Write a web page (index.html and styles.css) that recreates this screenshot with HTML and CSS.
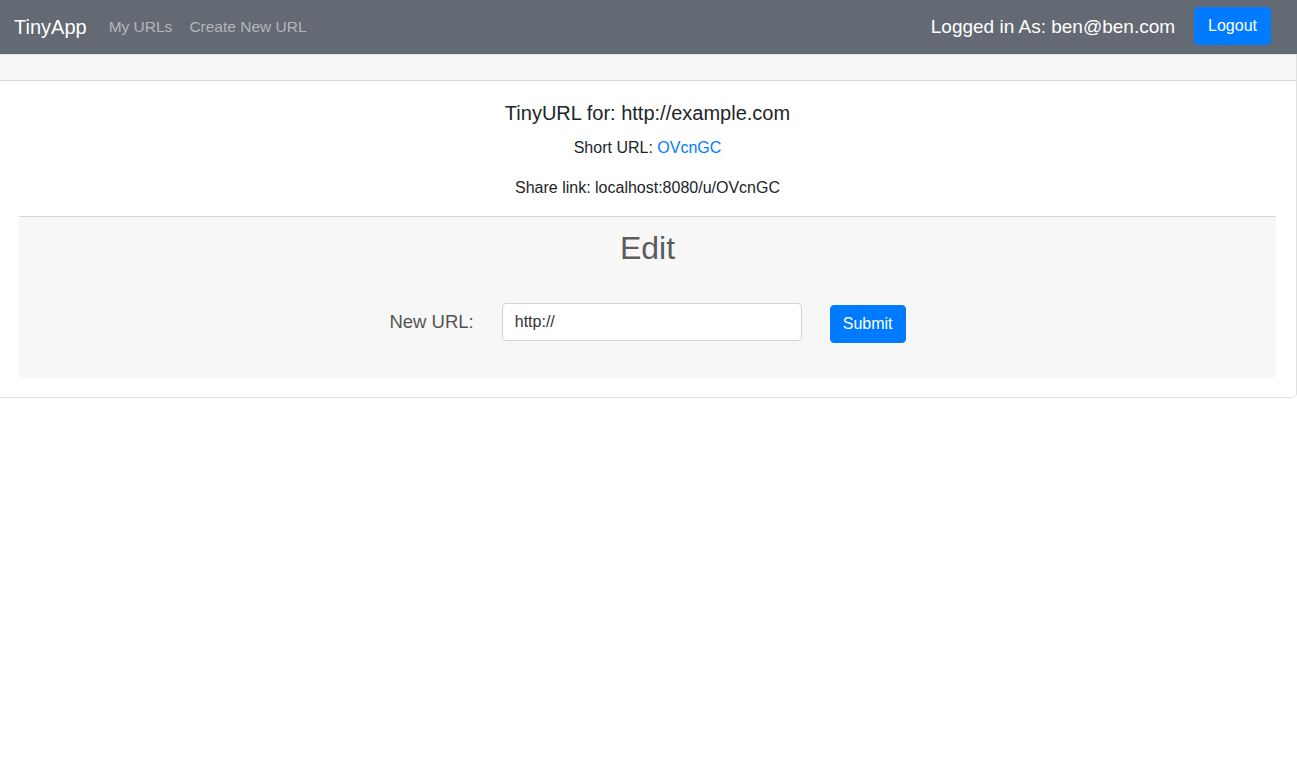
FILE: index.html
```html
<!DOCTYPE html>
<html>
<head>
<meta charset="utf-8">
<link rel="stylesheet" href="styles.css">
</head>
<body>
<nav class="navbar">
  <div class="nav-left">
    <a class="brand" href="#">TinyApp</a>
    <a class="nav-link" href="#">My URLs</a>
    <a class="nav-link" href="#">Create New URL</a>
  </div>
  <div class="nav-right">
    <span class="user">Logged in As: ben@ben.com</span>
    <button class="btn btn-primary logout">Logout</button>
  </div>
</nav>
<div class="card">
  <div class="card-header"></div>
  <div class="card-body">
    <h5 class="card-title">TinyURL for: http://example.com</h5>
    <p class="card-text">Short URL: <a href="#">OVcnGC</a></p>
    <p class="card-text">Share link: localhost:8080/u/OVcnGC</p>
    <div class="card-footer">
      <h2 class="edit-title">Edit</h2>
      <form class="edit-form">
        <label class="form-label">New URL:</label>
        <input class="form-control" type="text" value="http://">
        <button class="btn btn-primary submit" type="button">Submit</button>
      </form>
    </div>
  </div>
</div>
</body>
</html>
```
FILE: styles.css
```css
* { box-sizing: border-box; }
body {
  margin: 0;
  font-family: "Liberation Sans", Arial, sans-serif;
  font-size: 16px;
  line-height: 1.5;
  color: #212529;
  background: #fff;
}
.navbar {
  height: 54px;
  background: #636a73;
  display: flex;
  align-items: center;
  justify-content: space-between;
  padding: 0 26px 2px 14px;
}
.nav-left { display: flex; align-items: center; padding-top: 2px; }
.brand {
  color: #fff;
  font-size: 20px;
  text-decoration: none;
  margin-right: 22px;
}
.nav-link {
  color: #b3b6bb;
  text-decoration: none;
  font-size: 15.5px;
  margin-right: 17px;
}
.nav-right { display: flex; align-items: center; }
.user {
  color: #fff;
  font-size: 19px;
  margin-right: 19px;
  padding-top: 2px;
}
.btn {
  font-family: inherit;
  border: 1px solid transparent;
  border-radius: 4px;
  font-size: 16px;
  line-height: 1.5;
  padding: 6px 12px;
  cursor: pointer;
}
.btn-primary {
  background: #007bff;
  border-color: #007bff;
  color: #fff;
}
.logout { height: 38px; padding: 0 13px; }
.card {
  border: 1px solid rgba(0,0,0,.125);
  border-left: none;
  border-radius: 0 0 5px 0;
}
.card-header {
  height: 26px;
  background: #f7f7f7;
  border-bottom: 1px solid rgba(0,0,0,.125);
}
.card-body {
  padding: 20px 20px 19px 19px;
  text-align: center;
}
.card-title {
  font-size: 20px;
  font-weight: 500;
  line-height: 1.2;
  margin: 0 0 11px;
}
.card-text {
  margin: 0 0 16px;
  font-size: 16px;
}
.card-text a { color: #007bff; text-decoration: none; }
.card-footer {
  background: #f7f7f7;
  border-top: 1px solid rgba(0,0,0,.125);
  padding: 12px 20px 35px;
  border-radius: 0 0 4px 4px;
}
.edit-title {
  margin: 0 0 36px;
  font-size: 32px;
  font-weight: 500;
  line-height: 1.2;
  color: #5c5c5c;
}
.edit-form {
  display: flex;
  align-items: flex-start;
  justify-content: center;
}
.form-label {
  font-size: 18.5px;
  line-height: 38px;
  color: #555;
  margin-right: 28px;
}
.form-control {
  width: 300px;
  height: 38px;
  border: 1px solid #ced4da;
  border-radius: 4px;
  padding: 6px 12px;
  font-family: inherit;
  font-size: 16px;
  color: #333;
  background: #fff;
  margin-right: 28px;
}
.submit {
  height: 38px;
  padding: 0 12px;
  margin-top: 2px;
}
```
